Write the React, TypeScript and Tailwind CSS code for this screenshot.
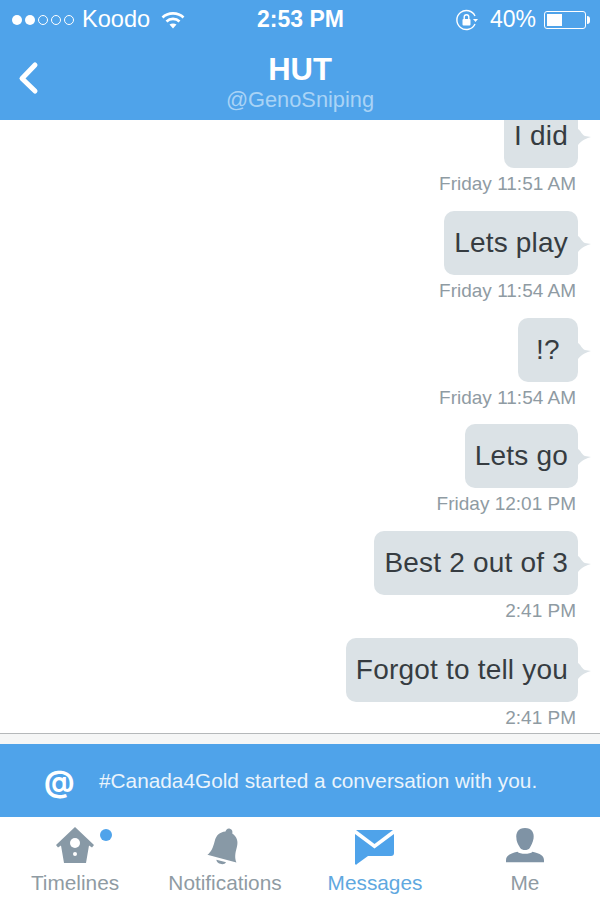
import React from 'react';

const sans = { fontFamily: '"Liberation Sans", Arial, sans-serif' };

type Message = { id: number; text: string; time: string };

const messages: Message[] = [
  { id: 1, text: 'I did', time: 'Friday 11:51 AM' },
  { id: 2, text: 'Lets play', time: 'Friday 11:54 AM' },
  { id: 3, text: '!?', time: 'Friday 11:54 AM' },
  { id: 4, text: 'Lets go', time: 'Friday 12:01 PM' },
  { id: 5, text: 'Best 2 out of 3', time: '2:41 PM' },
  { id: 6, text: 'Forgot to tell you', time: '2:41 PM' },
];

const Bubble = ({ message }: { message: Message }) => (
  <div className="flex h-[106.8px] flex-col items-end pr-[22px]">
    <div className="relative flex h-[64px] min-w-[60px] items-center justify-center rounded-[10px] bg-[#dbe2e6] px-[10px] text-[28px] leading-none tracking-[0.2px] text-[#363c41]">
      {message.text}
      <svg className="absolute left-full top-[25px]" width="13" height="16" viewBox="0 0 13 16">
        <path d="M0 0 C3 2 4 6 7 7 L13 8 C9 9 4 11 0 16 Z" fill="#dbe2e6" />
      </svg>
    </div>
    <div className="mr-[2px] text-[19px] leading-[32px] text-[#8f9ba3]">{message.time}</div>
  </div>
);

const StatusBar = () => (
  <div className="flex h-[39px] items-center justify-between pl-[12px] pr-[10px] text-white">
    <div className="flex w-[200px] items-center">
      <span className="size-[10px] rounded-full bg-white" />
      <span className="ml-[3px] size-[10px] rounded-full bg-white" />
      <span className="ml-[3px] size-[10px] rounded-full border border-white" />
      <span className="ml-[3px] size-[10px] rounded-full border border-white" />
      <span className="ml-[3px] size-[10px] rounded-full border border-white" />
      <span className="ml-[8px] text-[23.6px] leading-none">Koodo</span>
      <svg className="ml-[11px]" width="24" height="18" viewBox="0 0 24 18" fill="none" stroke="#fff" strokeWidth="2.6">
        <path d="M1.5 6.5 C7 1 17 1 22.5 6.5" />
        <path d="M5.5 10.5 C9 7 15 7 18.5 10.5" />
        <path d="M12 17.5 L8.5 13.5 C10.5 12 13.5 12 15.5 13.5 Z" fill="#fff" stroke="none" />
      </svg>
    </div>
    <div className="mr-[1px] text-[23px] font-bold leading-none">2:53 PM</div>
    <div className="flex w-[200px] items-center justify-end">
      <svg width="24" height="24" viewBox="0 0 24 24" fill="none" stroke="#fff" strokeWidth="1.4">
        <path d="M20 16 A9.5 9.5 0 1 1 20 8" />
        <path d="M18 11 L23 11 L20.5 14 Z" fill="#fff" stroke="none" />
        <rect x="7.5" y="11" width="8" height="6.5" rx="1" fill="#fff" stroke="none" />
        <path d="M9.2 11 V9 a2.3 2.3 0 0 1 4.6 0 V11" />
      </svg>
      <span className="ml-[11px] text-[23px] leading-none">40%</span>
      <div className="ml-[8px] h-[18px] w-[42px] rounded-[3px] border border-white p-[2px]">
        <div className="h-full w-[15px] bg-white" />
      </div>
      <span className="ml-[1px] h-[8px] w-[3px] rounded-r-full bg-white" />
    </div>
  </div>
);

const Header = () => (
  <div className="relative h-[120px] bg-[#4fa3ea]">
    <StatusBar />
    <div className="flex flex-col items-center">
      <div className="mt-[11px] text-[31px] font-bold leading-[40px] text-white">HUT</div>
      <div className="text-[21.8px] leading-[20px] text-[#a9d3f6]">@GenoSniping</div>
    </div>
    <svg className="absolute left-[16px] top-[60px]" width="24" height="36" viewBox="0 0 24 36" fill="none">
      <path d="M19 5 L6 18.5 L19 31" stroke="#fff" strokeWidth="5" strokeLinecap="round" strokeLinejoin="round" />
    </svg>
  </div>
);

const HomeIcon = () => (
  <svg width="40" height="38" viewBox="0 0 40 38">
    <path d="M20 0 L39 18 L37 20.5 L34 18.5 L31 36 L9 36 L6 18.5 L3 20.5 L1 18 Z" fill="#8899a6" />
    <circle cx="20" cy="16" r="5" fill="#fff" />
    <circle cx="20" cy="27" r="2" fill="#fff" />
  </svg>
);

const BellIcon = () => (
  <svg className="mt-[4px]" width="36" height="42" viewBox="0 0 36 42">
    <g transform="rotate(15 18 20)" fill="#8899a6">
      <path d="M18 1 C20.5 1 21.5 3 21.5 5 C27 7 29.5 11 29.5 17 C29.5 24 30 28 33 32 H3 C6 28 6.5 24 6.5 17 C6.5 11 9 7 14.5 5 C14.5 3 15.5 1 18 1 Z" />
      <path d="M13 34.5 H23 C22 38.5 14 38.5 13 34.5 Z" />
    </g>
  </svg>
);

const MailIcon = () => (
  <svg className="mt-[2px]" width="40" height="38" viewBox="0 0 40 38">
    <path d="M1 2 H38 L19.5 16 Z" fill="#4fa3ea" />
    <path d="M39 6 V25 a3 3 0 0 1 -3 3 H13 L2 36 a1 1 0 0 1 -2 -1 V6 L19.5 20.5 Z" fill="#4fa3ea" />
  </svg>
);

const PersonIcon = () => (
  <svg width="38" height="38" viewBox="0 0 40 38">
    <path d="M20 0 C27 0 30 5 29 11 C28.5 15 26 19 25 21 C23 24 17 24 15 21 C14 19 11 15 11 11 C10 5 13 0 20 0 Z" fill="#7f93a5" />
    <path d="M0 34 C0 29 4 27 12 25 C15 28 25 28 28 25 C36 27 40 29 40 34 V36 H0 Z" fill="#7f93a5" />
  </svg>
);

const tabs = [
  { label: 'Timelines', icon: <HomeIcon />, color: 'text-[#8f9ba3]', dot: true },
  { label: 'Notifications', icon: <BellIcon />, color: 'text-[#8f9ba3]', dot: false },
  { label: 'Messages', icon: <MailIcon />, color: 'text-[#5fa8e0]', dot: false },
  { label: 'Me', icon: <PersonIcon />, color: 'text-[#8f9ba3]', dot: false },
];

export default function App() {
  return (
    <div className="flex h-[900px] w-[600px] flex-col overflow-hidden bg-white" style={sans}>
      <Header />
      <div className="h-[613px] overflow-hidden">
        <div className="mt-[-16px]">
          {messages.map((m) => (
            <Bubble key={m.id} message={m} />
          ))}
        </div>
      </div>
      <div className="h-[11px] border-t border-[#b5b8ba] bg-[#f5f6f6]" />
      <div className="flex h-[73px] items-center bg-[#4fa3ea] text-[20.8px] text-[#eaf4fc]">
        <span className="ml-[44px] w-[55px] font-['Inter'] text-[30px] font-bold leading-none text-white">@</span>
        <span>#Canada4Gold started a conversation with you.</span>
      </div>
      <div className="grid flex-1 grid-cols-4 bg-white pt-[10px]">
        {tabs.map((t) => (
          <div key={t.label} className="relative flex flex-col items-center">
            <div className="flex h-[38px] items-center justify-center">{t.icon}</div>
            <span className={`mt-[4px] text-[20.8px] leading-[28px] ${t.color}`}>{t.label}</span>
            {t.dot && <span className="absolute left-[100px] top-[2px] size-[12px] rounded-full bg-[#4fa3ea]" />}
          </div>
        ))}
      </div>
    </div>
  );
}
